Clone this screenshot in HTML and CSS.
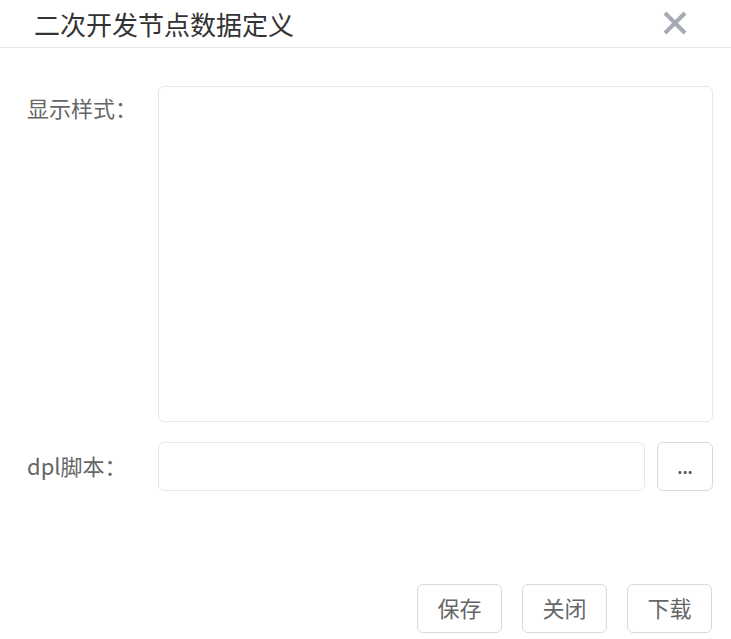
FILE: index.html
```html
<!DOCTYPE html>
<html lang="zh-CN">
<head>
    <meta charset="UTF-8">
    <meta name="viewport" content="width=device-width, initial-scale=1.0">
    <title>二次开发节点数据定义</title>
    <link rel="stylesheet" href="styles.css">
</head>
<body>
    <div class="dialog">
        <div class="dialog-head">
            <span class="dialog-title">二次开发节点数据定义</span>
            <span class="dialog-close">
                <svg width="24" height="24" viewBox="0 0 24 24">
                    <path d="M2 2 L22 22 M22 2 L2 22" stroke="#a6aab5" stroke-width="4" fill="none"/>
                </svg>
            </span>
        </div>
        <div class="dialog-body">
            <div class="row">
                <label class="row-label">显示样式：</label>
                <textarea class="field field-area"></textarea>
            </div>
            <div class="row">
                <label class="row-label">dpl脚本：</label>
                <input class="field field-input" type="text">
                <button class="btn btn-more">...</button>
            </div>
        </div>
        <div class="dialog-foot">
            <button class="btn">保存</button>
            <button class="btn">关闭</button>
            <button class="btn">下载</button>
        </div>
    </div>
</body>
</html>
```

FILE: styles.css
```css
*{
    padding: 0;
    margin: 0;
    box-sizing: border-box;
}
body{
    background: #fff;
    font-family: "Noto Sans CJK SC", "Noto Sans", sans-serif;
    color: #666;
}
.dialog-head{
    height: 48px;
    border-bottom: 1px solid #e3e5ea;
    display: flex;
    align-items: center;
    justify-content: space-between;
    padding: 0 44px 0 35px;
}
.dialog-title{
    font-size: 26px;
    color: #333;
    line-height: 46px;
    margin-left: -1px;
}
.dialog-close{
    display: flex;
    margin-top: -1px;
}
.dialog-body{
    padding: 38px 18px 0 27px;
    display: flex;
    flex-direction: column;
    gap: 20px;
}
.row{
    display: flex;
    gap: 12px;
}
.row-label{
    width: 131px;
    margin-right: -12px;
    flex-shrink: 0;
    font-size: 22px;
    line-height: 42px;
    color: #666;
}
.row + .row .row-label{
    line-height: 46px;
}
.field{
    border: 1px solid #e6e6e6;
    border-radius: 6px;
    background: #fff;
    outline: none;
    font-family: inherit;
}
.field-area{
    width: 555px;
    height: 336px;
    resize: none;
}
.field-input{
    width: 487px;
    height: 49px;
}
.btn{
    width: 85px;
    height: 49px;
    border: 1px solid #d9d9d9;
    border-radius: 6px;
    background: #fff;
    font-family: inherit;
    font-size: 22px;
    color: #666;
    padding-bottom: 4px;
}
.btn-more{
    width: 56px;
    font-size: 16px;
    color: #555;
    font-weight: bold;
    padding: 0;
}
.dialog-foot{
    display: flex;
    justify-content: flex-end;
    gap: 20px;
    padding: 93px 19px 0 0;
}
```
